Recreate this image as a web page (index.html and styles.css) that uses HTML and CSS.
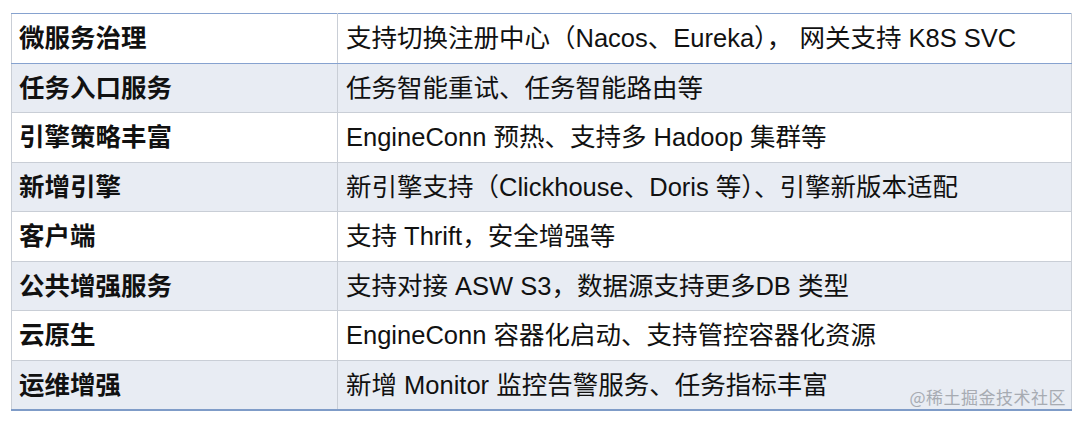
FILE: index.html
```html
<!DOCTYPE html>
<html lang="zh">
<head>
<meta charset="utf-8">
<link rel="stylesheet" href="styles.css">
</head>
<body>
<div class="wrap">
<table class="tbl">
  <tbody>
    <tr class="r-white first"><td class="k">微服务治理</td><td class="v">支持切换注册中心（Nacos、Eureka）， 网关支持 K8S SVC</td></tr>
    <tr class="r-blue"><td class="k">任务入口服务</td><td class="v">任务智能重试、任务智能路由等</td></tr>
    <tr class="r-white"><td class="k">引擎策略丰富</td><td class="v">EngineConn 预热、支持多 Hadoop 集群等</td></tr>
    <tr class="r-blue"><td class="k">新增引擎</td><td class="v">新引擎支持（Clickhouse、Doris 等）、引擎新版本适配</td></tr>
    <tr class="r-white"><td class="k">客户端</td><td class="v">支持 Thrift，安全增强等</td></tr>
    <tr class="r-blue"><td class="k">公共增强服务</td><td class="v">支持对接 ASW S3，数据源支持更多DB 类型</td></tr>
    <tr class="r-white"><td class="k">云原生</td><td class="v">EngineConn 容器化启动、支持管控容器化资源</td></tr>
    <tr class="r-blue last"><td class="k">运维增强</td><td class="v">新增 Monitor 监控告警服务、任务指标丰富</td></tr>
  </tbody>
</table>
<div class="watermark">@稀土掘金技术社区</div>
</div>
</body>
</html>
```

FILE: styles.css
```css
html, body {
  margin: 0;
  padding: 0;
  background: #ffffff;
}
body {
  font-family: "Liberation Sans", "Noto Sans CJK SC", sans-serif;
  color: #111111;
}
.wrap {
  position: relative;
  width: 1080px;
  height: 422px;
  padding: 13px 0 0 11px;
  box-sizing: border-box;
}
.tbl {
  border-collapse: collapse;
  width: 1061px;
  table-layout: fixed;
}
.tbl td {
  height: 48.5px;
  padding: 0 0 0 7px;
  border: 1px solid #c9ced6;
  vertical-align: middle;
  font-size: 25.5px;
  line-height: 28px;
  white-space: nowrap;
}
.tbl td.k {
  width: 318px;
  font-weight: bold;
}
.tbl td.v {
  padding-left: 8px;
}
.tbl tr.first td {
  border-top: 1px solid #86a2cf;
  border-bottom: 1px solid #86a2cf;
}
.tbl tr.last td {
  border-bottom: 2px solid #7f9cc8;
}
.r-white {
  background: #ffffff;
}
.r-blue {
  background: #e8ecf3;
}
.watermark {
  position: absolute;
  right: 14px;
  top: 386px;
  font-family: "Noto Sans CJK SC", sans-serif;
  font-size: 17px;
  line-height: 22px;
  color: #a7abb2;
  letter-spacing: 0.5px;
}
```
